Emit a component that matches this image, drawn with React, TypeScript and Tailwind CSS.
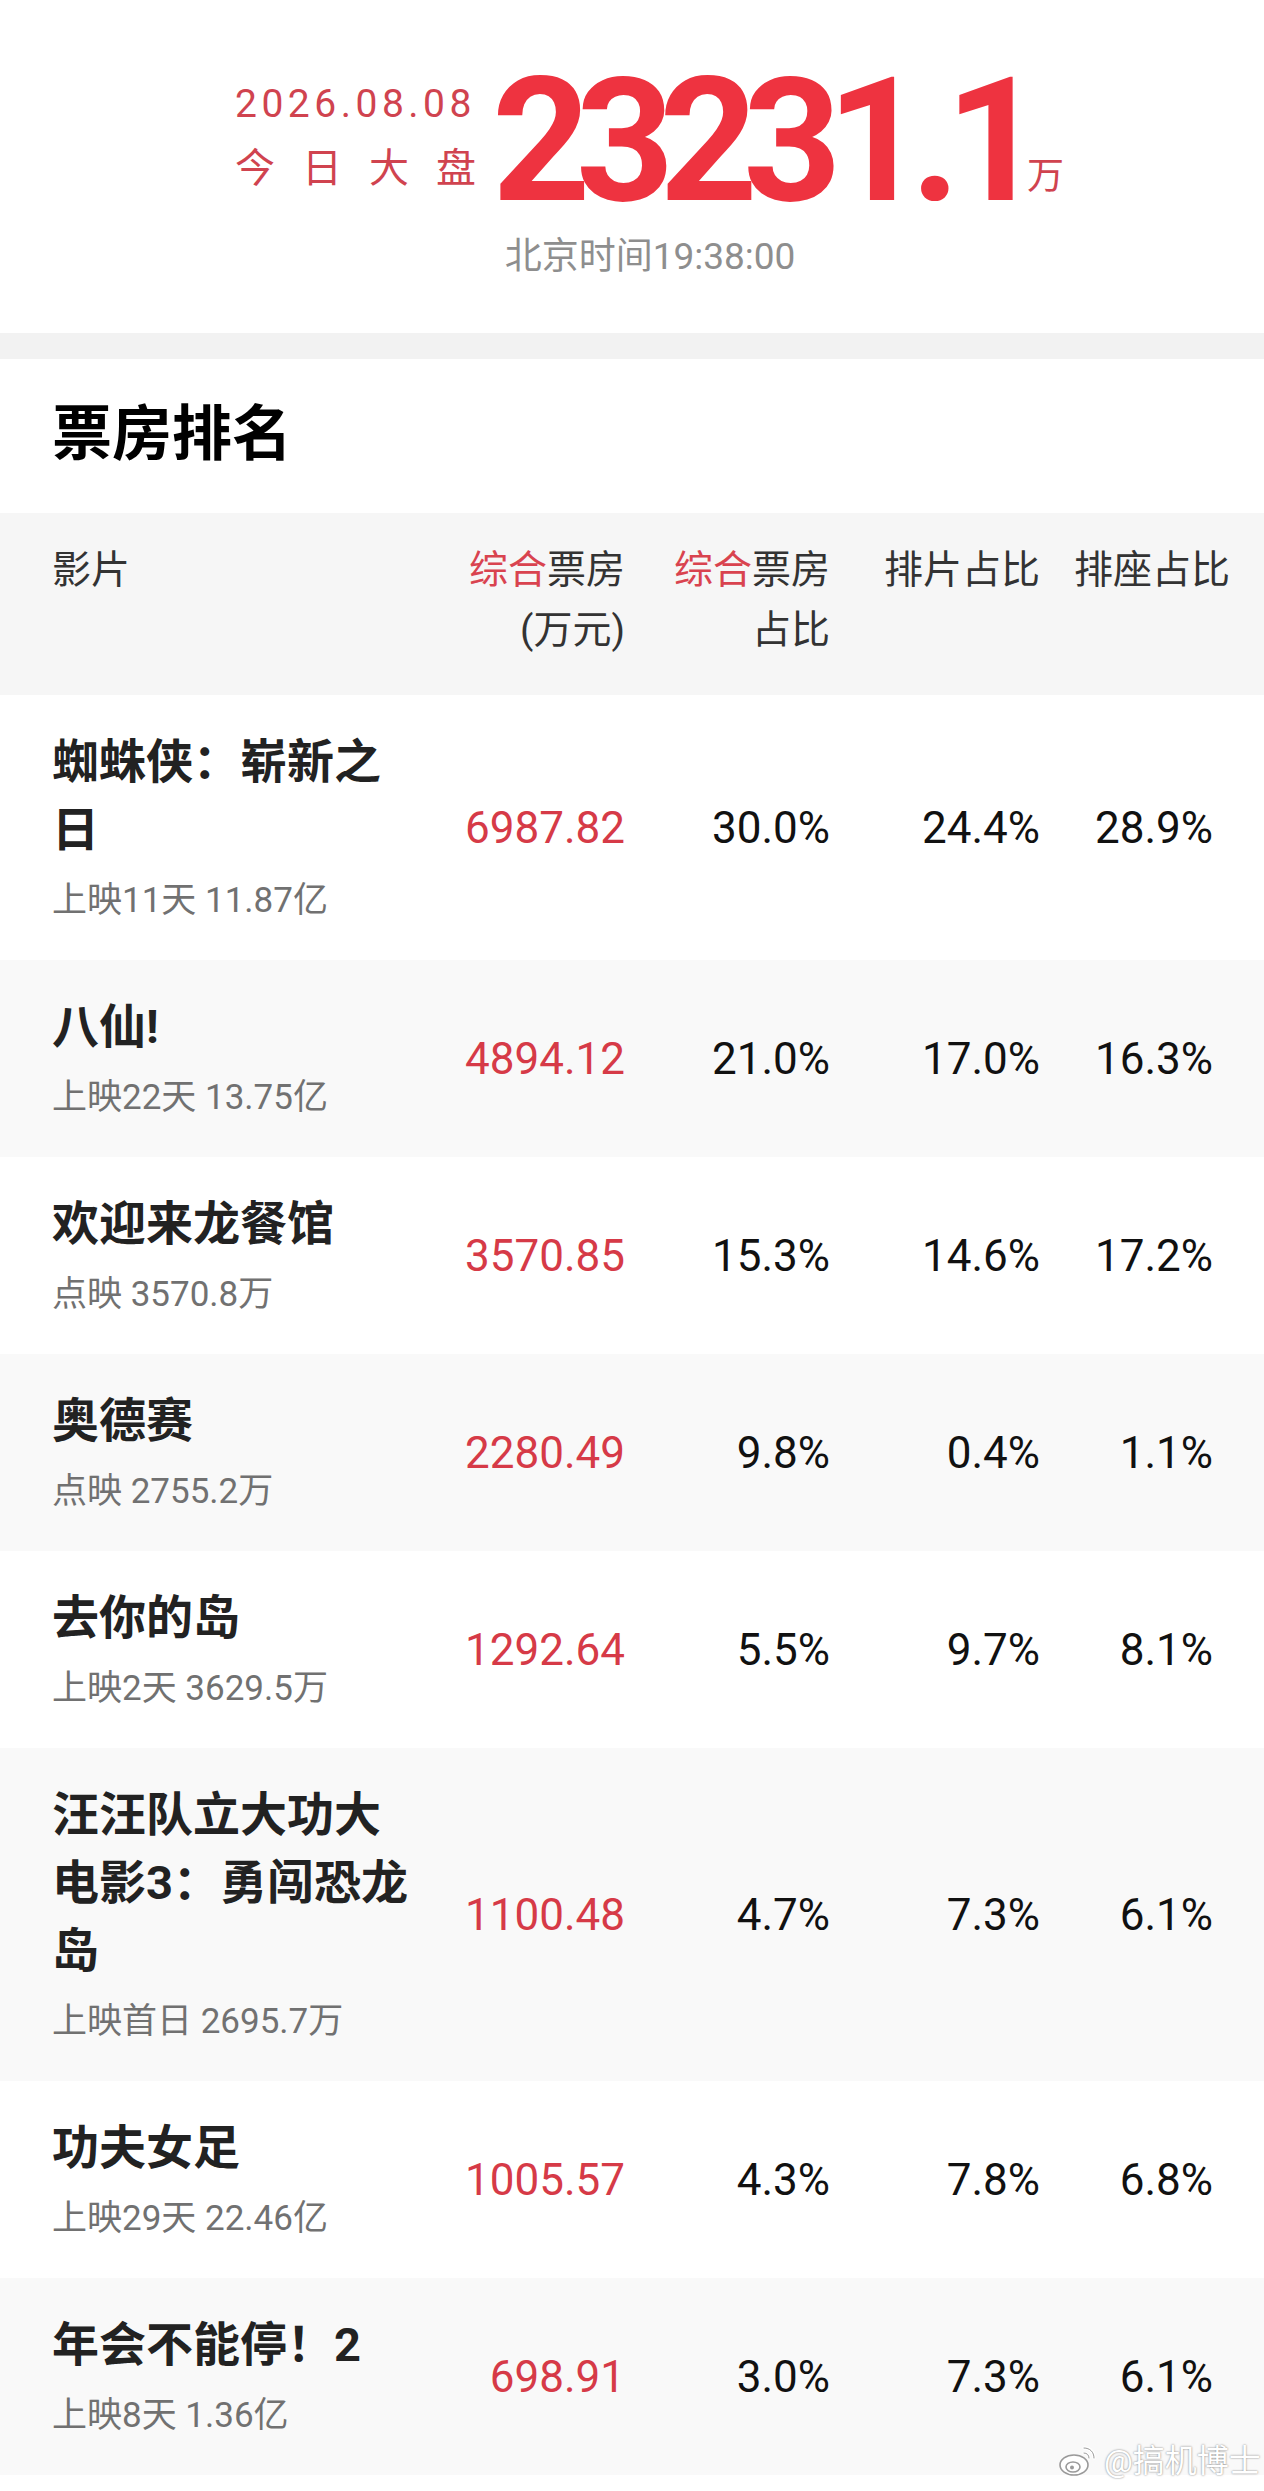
import React from "react";

type Film = {
  name: string;
  sub: string;
  box: string;
  share: string;
  sched: string;
  seat: string;
};

const films: Film[] = [
  { name: "蜘蛛侠：崭新之日", sub: "上映11天 11.87亿", box: "6987.82", share: "30.0%", sched: "24.4%", seat: "28.9%" },
  { name: "八仙!", sub: "上映22天 13.75亿", box: "4894.12", share: "21.0%", sched: "17.0%", seat: "16.3%" },
  { name: "欢迎来龙餐馆", sub: "点映 3570.8万", box: "3570.85", share: "15.3%", sched: "14.6%", seat: "17.2%" },
  { name: "奥德赛", sub: "点映 2755.2万", box: "2280.49", share: "9.8%", sched: "0.4%", seat: "1.1%" },
  { name: "去你的岛", sub: "上映2天 3629.5万", box: "1292.64", share: "5.5%", sched: "9.7%", seat: "8.1%" },
  { name: "汪汪队立大功大电影3：勇闯恐龙岛", sub: "上映首日 2695.7万", box: "1100.48", share: "4.7%", sched: "7.3%", seat: "6.1%" },
  { name: "功夫女足", sub: "上映29天 22.46亿", box: "1005.57", share: "4.3%", sched: "7.8%", seat: "6.8%" },
  { name: "年会不能停！2", sub: "上映8天 1.36亿", box: "698.91", share: "3.0%", sched: "7.3%", seat: "6.1%" },
];

function WeiboLogo() {
  return (
    <svg width="40" height="34" viewBox="0 0 40 34" fill="none">
      <ellipse cx="16" cy="21" rx="14" ry="10" fill="#fff" stroke="#9a9a9a" strokeWidth="1.6" />
      <ellipse cx="15" cy="23" rx="7" ry="5" fill="#fff" stroke="#9a9a9a" strokeWidth="1.6" />
      <circle cx="14" cy="23.5" r="2" fill="#9a9a9a" />
      <path d="M26 4 C32 4 36 8 36 14" stroke="#fff" strokeWidth="3.4" strokeLinecap="round" />
      <path d="M26 4 C32 4 36 8 36 14" stroke="#9a9a9a" strokeWidth="1" strokeLinecap="round" fill="none" />
      <path d="M26 9 C29 9 31 11 31 14" stroke="#fff" strokeWidth="3" strokeLinecap="round" />
      <path d="M26 9 C29 9 31 11 31 14" stroke="#9a9a9a" strokeWidth="1" strokeLinecap="round" fill="none" />
    </svg>
  );
}

export default function App() {
  return (
    <div className="relative w-[1264px] min-h-[2491px] bg-white font-[Roboto,'Noto_Sans_CJK_SC',sans-serif]">
      {/* 今日大盘 header */}
      <div className="pb-[54px]">
        <div className="flex items-start pt-[66px] pl-[235px]">
          <div className="w-[241px] mt-[16px] flex flex-col">
            <div className="text-[39px] leading-[44px] tracking-[4.5px] text-[#d0434f] whitespace-nowrap">2026.08.08</div>
            <div className="mt-[19px] flex justify-between text-[40px] leading-[48px] text-[#d0434f]">
              <span>今</span>
              <span>日</span>
              <span>大</span>
              <span>盘</span>
            </div>
          </div>
          <div className="ml-[16px] text-[172px] leading-[150px] font-bold tracking-[-15px] text-[#ee3340] whitespace-nowrap">
            23231.1
          </div>
          <div className="ml-[-2px] mt-[91px] text-[37px] leading-[40px] text-[#d0434f]">万</div>
        </div>
        <div className="mt-[19px] pl-[36px] text-center text-[37px] leading-[44px] text-[#8e8e8e]">北京时间19:38:00</div>
      </div>

      <div className="h-[26px] bg-[#f2f2f2]" />

      {/* 票房排名 */}
      <div className="pt-[36px] pb-[38px] pl-[52px] text-[60px] leading-[80px] font-bold text-black">票房排名</div>

      {/* table header */}
      <div className="grid grid-cols-[370px_203px_205px_210px_1fr] pl-[52px] pr-[34px] pt-[27px] pb-[35px] bg-[#f6f6f6] text-[39px] leading-[60px] text-[#333]">
        <div>影片</div>
        <div className="text-right">
          <span className="text-[#d9434f]">综合</span>票房
          <br />(万元)
        </div>
        <div className="text-right">
          <span className="text-[#d9434f]">综合</span>票房
          <br />占比
        </div>
        <div className="text-right">排片占比</div>
        <div className="text-right">排座占比</div>
      </div>

      {/* rows */}
      {films.map((f, i) => (
        <div
          key={f.name}
          className={`grid grid-cols-[370px_203px_205px_210px_1fr] items-center pl-[52px] pr-[34px] ${i % 2 === 1 ? "bg-[#f9f9f9]" : "bg-white"}`}
        >
          <div className="pt-[33px] pb-[35px]">
            <div className="text-[47px] leading-[68px] font-bold text-[#222]">{f.name}</div>
            <div className="mt-[13px] text-[35px] leading-[48px] text-[#717171] whitespace-nowrap">{f.sub}</div>
          </div>
          <div className="text-right text-[44px] text-[#d63a47]">{f.box}</div>
          <div className="text-right text-[44px] text-[#111]">{f.share}</div>
          <div className="text-right text-[44px] text-[#111]">{f.sched}</div>
          <div className="text-right pr-[17px] text-[44px] text-[#111]">{f.seat}</div>
        </div>
      ))}

      {/* watermark */}
      <div className="absolute left-[1058px] top-[2442px] flex items-center gap-[6px] text-[32px] leading-[38px] text-white [text-shadow:0_0_2px_rgba(0,0,0,0.55)]">
        <WeiboLogo />
        <span>@搞机博士</span>
      </div>
    </div>
  );
}
